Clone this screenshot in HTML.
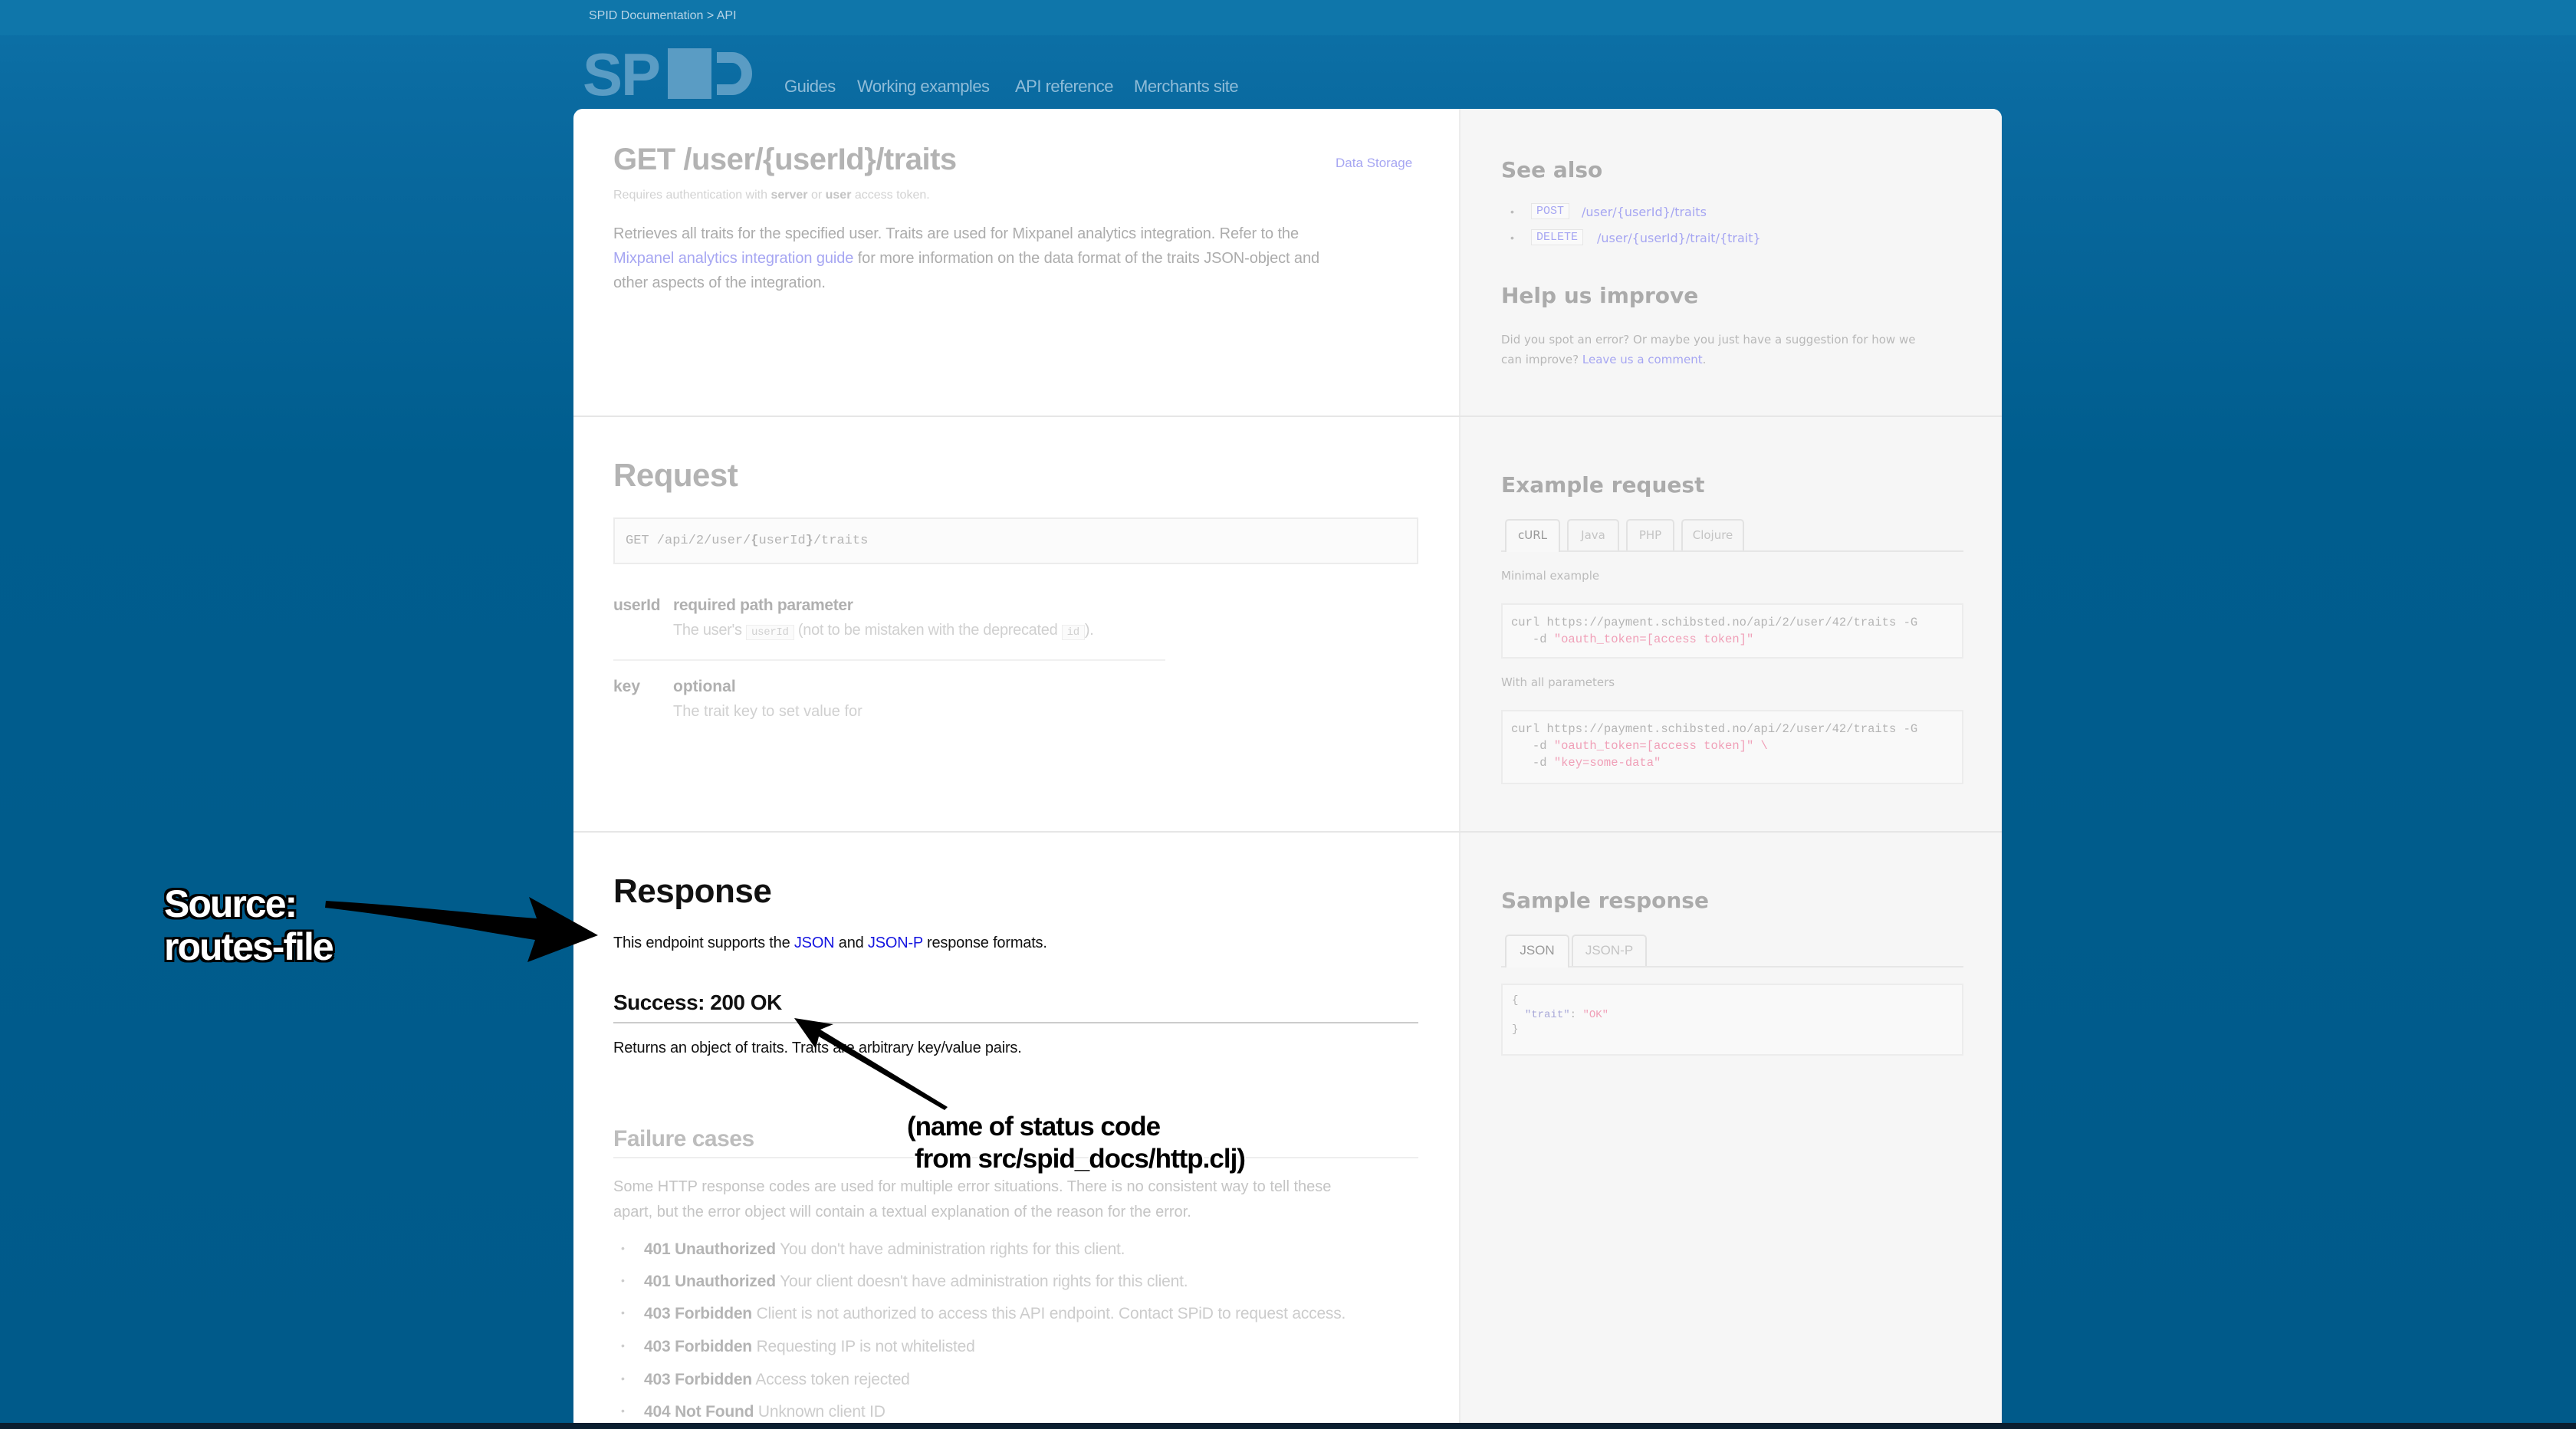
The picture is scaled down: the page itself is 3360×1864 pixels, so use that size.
<!DOCTYPE html>
<html><head><meta charset="utf-8"><style>
*{margin:0;padding:0;box-sizing:border-box}
body{width:3360px;height:1864px;overflow:hidden;position:relative;font-family:"Liberation Sans",Arial,sans-serif;background:linear-gradient(#0d72a8 0px,#0a6aa0 140px,#005d8e 600px,#005a8a 1864px)}
.a{position:absolute;white-space:nowrap}
.topbar{position:absolute;left:0;top:0;width:3360px;height:46px;background:#0f76aa}
.card{position:absolute;left:748px;top:142px;width:1863px;height:1720px;background:#fff;border-radius:12px 12px 0 0;overflow:hidden}
.right{position:absolute;left:1155px;top:0;width:708px;height:1720px;background:#f6f6f6;border-left:2px solid #ececec}
.hr{position:absolute;left:0;width:1863px;height:2px;background:#e6e6e6}
.bottom{position:absolute;left:0;top:1856px;width:3360px;height:8px;background:#0a1e30}
.mono{font-family:"Liberation Mono",monospace}
.code{position:absolute;border:2px solid #ececec;background:#fbfbfb}
.tab{position:absolute;border:2px solid #e2e2e2;border-bottom:none;border-radius:5px 5px 0 0;font-family:"DejaVu Sans",sans-serif;font-size:15px;color:#c4c4c4;text-align:center;background:#f6f6f6;white-space:nowrap}
.rs{font-family:"DejaVu Sans",sans-serif}
.li{position:absolute;left:800px;font-size:21px;color:#ccc;white-space:nowrap;letter-spacing:-0.2px}
.li b{color:#b4b4b4}
.li:before{content:"•";position:absolute;left:10px;top:2px;font-size:14px;color:#ccc}
.li span{margin-left:40px}
.outw{color:#fff;font-weight:bold;text-shadow:-3px -3px 0 #000,3px -3px 0 #000,-3px 3px 0 #000,3px 3px 0 #000,0 3px 0 #000,0 -3px 0 #000,3px 0 0 #000,-3px 0 0 #000}
.outb{color:#000;font-weight:bold;text-shadow:-2px -2px 0 #fff,2px -2px 0 #fff,-2px 2px 0 #fff,2px 2px 0 #fff,0 2px 0 #fff,0 -2px 0 #fff,2px 0 0 #fff,-2px 0 0 #fff}
</style></head><body>
<div class="topbar"></div>
<div class="a" style="left:768px;top:12px;font-size:16px;color:#b8d4e6">SPID Documentation &gt; API</div>
<div class="a" style="left:760px;top:52px;font-size:78px;font-weight:bold;color:#5a9cc4;letter-spacing:-2px;line-height:90px">SP</div>
<div class="a" style="left:871px;top:63px;width:57px;height:66px;background:#5a9cc4"></div>
<svg class="a" style="left:935px;top:62px" width="56" height="68"><path d="M0 6 H20 A26 28 0 0 1 20 62 H0 V48 H20 A12 14 0 0 0 20 20 H0 Z" fill="#5a9cc4"/></svg>
<div class="a" style="left:1023px;top:100px;font-size:22px;color:#8fbcd8;letter-spacing:-0.5px">Guides</div>
<div class="a" style="left:1118px;top:100px;font-size:22px;color:#8fbcd8;letter-spacing:-0.5px">Working examples</div>
<div class="a" style="left:1324px;top:100px;font-size:22px;color:#8fbcd8;letter-spacing:-0.5px">API reference</div>
<div class="a" style="left:1479px;top:100px;font-size:22px;color:#8fbcd8;letter-spacing:-0.5px">Merchants site</div>

<div class="card">
<div class="right"></div>
<div class="hr" style="top:400px"></div>
<div class="hr" style="top:942px"></div>
</div>
<div class="bottom"></div>

<div class="a" style="left:800px;top:186px;font-size:40px;font-weight:bold;color:#b3b3b3;letter-spacing:-0.5px">GET /user/{userId}/traits</div>
<div class="a" style="left:1742px;top:203px;font-size:17px;color:#a6a6f2">Data Storage</div>
<div class="a" style="left:800px;top:246px;font-size:16px;color:#d2d2d2">Requires authentication with <b style="color:#c4c4c4">server</b> or <b style="color:#c4c4c4">user</b> access token.</div>
<div class="a" style="left:800px;top:289px;font-size:20px;line-height:32px;color:#acacac;letter-spacing:-0.1px">Retrieves all traits for the specified user. Traits are used for Mixpanel analytics integration. Refer to the<br><span style="color:#a6a6f2">Mixpanel analytics integration guide</span> for more information on the data format of the traits JSON-object and<br>other aspects of the integration.</div>

<div class="a rs" style="left:1958px;top:205px;font-size:28px;font-weight:bold;color:#ababab">See also</div>
<div class="a" style="left:1970px;top:268px;font-size:14px;color:#bbb">•</div>
<div class="a mono" style="left:1997px;top:265px;border:1px solid #e6e6e6;background:#fafafa;padding:1px 6px;font-size:15px;color:#a6a6f2">POST</div>
<div class="a rs" style="left:2063px;top:267px;font-size:16px;color:#a6a6f2">/user/{userId}/traits</div>
<div class="a" style="left:1970px;top:302px;font-size:14px;color:#bbb">•</div>
<div class="a mono" style="left:1997px;top:299px;border:1px solid #e6e6e6;background:#fafafa;padding:1px 6px;font-size:15px;color:#a6a6f2">DELETE</div>
<div class="a rs" style="left:2083px;top:301px;font-size:16px;color:#a6a6f2">/user/{userId}/trait/{trait}</div>
<div class="a rs" style="left:1958px;top:369px;font-size:28px;font-weight:bold;color:#ababab">Help us improve</div>
<div class="a rs" style="left:1958px;top:430px;font-size:15px;line-height:26px;color:#b8b8b8">Did you spot an error? Or maybe you just have a suggestion for how we<br>can improve? <span style="color:#a6a6f2">Leave us a comment</span>.</div>

<div class="a" style="left:800px;top:596px;font-size:42px;font-weight:bold;color:#b3b3b3;letter-spacing:-0.5px">Request</div>
<div class="code" style="left:800px;top:675px;width:1050px;height:61px"></div>
<div class="a mono" style="left:816px;top:696px;font-size:17px;color:#b4b4b4">GET /api/2/user/<b>{</b>userId<b>}</b>/traits</div>
<div class="a" style="left:800px;top:778px;font-size:21px;font-weight:bold;color:#b0b0b0;letter-spacing:-0.3px">userId</div>
<div class="a" style="left:878px;top:778px;font-size:21px;font-weight:bold;color:#b0b0b0;letter-spacing:-0.3px">required path parameter</div>
<div class="a" style="left:878px;top:811px;font-size:20px;color:#d0d0d0;letter-spacing:-0.3px">The user's <span class="mono" style="font-size:14px;border:1px solid #eee;padding:1px 6px;background:#fbfbfb">userId</span> (not to be mistaken with the deprecated <span class="mono" style="font-size:14px;border:1px solid #eee;padding:1px 6px;background:#fbfbfb">id</span>).</div>
<div class="a" style="left:800px;top:860px;width:720px;height:2px;background:#f0f0f0"></div>
<div class="a" style="left:800px;top:884px;font-size:21px;font-weight:bold;color:#b0b0b0">key</div>
<div class="a" style="left:878px;top:884px;font-size:21px;font-weight:bold;color:#b0b0b0">optional</div>
<div class="a" style="left:878px;top:917px;font-size:20px;color:#d0d0d0">The trait key to set value for</div>

<div class="a rs" style="left:1958px;top:616px;font-size:28px;font-weight:bold;color:#ababab">Example request</div>
<div class="a" style="left:1958px;top:718px;width:603px;height:2px;background:#e6e6e6"></div>
<div class="tab" style="left:1963px;top:677px;width:72px;height:43px;line-height:38px;color:#999;background:#f8f8f8">cURL</div>
<div class="tab" style="left:2044px;top:677px;width:68px;height:41px;line-height:38px">Java</div>
<div class="tab" style="left:2121px;top:677px;width:63px;height:41px;line-height:38px">PHP</div>
<div class="tab" style="left:2193px;top:677px;width:82px;height:41px;line-height:38px">Clojure</div>
<div class="a rs" style="left:1958px;top:742px;font-size:15px;color:#bbb">Minimal example</div>
<div class="code" style="left:1958px;top:787px;width:603px;height:72px;background:#f9f9f9"></div>
<div class="a mono" style="left:1971px;top:801px;font-size:15.5px;line-height:22px;color:#b4b4b4">curl https://payment.schibsted.no/api/2/user/42/traits -G<br>&nbsp;&nbsp;&nbsp;-d <span style="color:#f0a0b8">"oauth_token=[access token]"</span></div>
<div class="a rs" style="left:1958px;top:881px;font-size:15px;color:#bbb">With all parameters</div>
<div class="code" style="left:1958px;top:926px;width:603px;height:97px;background:#f9f9f9"></div>
<div class="a mono" style="left:1971px;top:940px;font-size:15.5px;line-height:22px;color:#b4b4b4">curl https://payment.schibsted.no/api/2/user/42/traits -G<br>&nbsp;&nbsp;&nbsp;-d <span style="color:#f0a0b8">"oauth_token=[access token]" \</span><br>&nbsp;&nbsp;&nbsp;-d <span style="color:#f0a0b8">"key=some-data"</span></div>

<div class="a" style="left:800px;top:1138px;font-size:44px;font-weight:bold;color:#111;letter-spacing:-0.5px">Response</div>
<div class="a" style="left:800px;top:1219px;font-size:20px;color:#111;letter-spacing:-0.2px">This endpoint supports the <span style="color:#1515e0">JSON</span> and <span style="color:#1515e0">JSON-P</span> response formats.</div>
<div class="a" style="left:800px;top:1292px;font-size:28px;font-weight:bold;color:#111;letter-spacing:-0.5px">Success: 200 OK</div>
<div class="a" style="left:800px;top:1333px;width:1050px;height:2px;background:#ccc"></div>
<div class="a" style="left:800px;top:1356px;font-size:20px;color:#111;letter-spacing:-0.2px">Returns an object of traits. Traits are arbitrary key/value pairs.</div>
<div class="a" style="left:800px;top:1469px;font-size:30px;font-weight:bold;color:#bdbdbd;letter-spacing:-0.5px">Failure cases</div>
<div class="a" style="left:800px;top:1509px;width:1050px;height:2px;background:#eee"></div>
<div class="a" style="left:800px;top:1532px;font-size:20px;line-height:33px;color:#c4c4c4">Some HTTP response codes are used for multiple error situations. There is no consistent way to tell these<br>apart, but the error object will contain a textual explanation of the reason for the error.</div>
<div class="li" style="top:1618px"><span><b>401 Unauthorized</b> You don't have administration rights for this client.</span></div>
<div class="li" style="top:1660px"><span><b>401 Unauthorized</b> Your client doesn't have administration rights for this client.</span></div>
<div class="li" style="top:1702px"><span><b>403 Forbidden</b> Client is not authorized to access this API endpoint. Contact SPiD to request access.</span></div>
<div class="li" style="top:1745px"><span><b>403 Forbidden</b> Requesting IP is not whitelisted</span></div>
<div class="li" style="top:1788px"><span><b>403 Forbidden</b> Access token rejected</span></div>
<div class="li" style="top:1830px"><span><b>404 Not Found</b> Unknown client ID</span></div>

<div class="a rs" style="left:1958px;top:1158px;font-size:28px;font-weight:bold;color:#ababab">Sample response</div>
<div class="a" style="left:1958px;top:1260px;width:603px;height:2px;background:#e6e6e6"></div>
<div class="tab" style="left:1963px;top:1219px;width:84px;height:43px;line-height:38px;color:#999;background:#f8f8f8;font-family:'Liberation Sans',sans-serif;font-size:17px">JSON</div>
<div class="tab" style="left:2050px;top:1219px;width:98px;height:41px;line-height:38px;font-family:'Liberation Sans',sans-serif;font-size:17px">JSON-P</div>
<div class="code" style="left:1958px;top:1283px;width:603px;height:94px;background:#f9f9f9"></div>
<div class="a mono" style="left:1972px;top:1296px;font-size:14px;line-height:19px;color:#b4b4b4">{<br>&nbsp;&nbsp;<span style="color:#a8a8d8">"trait"</span>: <span style="color:#f0a0b8">"OK"</span><br>}</div>

<svg class="a" style="left:0;top:0" width="3360" height="1864">
<path d="M425 1175 C540 1182 620 1192 700 1198 L690 1170 L780 1220 L688 1255 L698 1226 C610 1212 530 1196 424 1184 Z" fill="#000"/>
<path d="M1236 1444 L1070 1343 L1087 1336 L1036 1328 L1064 1368 L1068 1352 L1232 1448 Z" fill="#000"/>
</svg>
<div class="a outw" style="left:214px;top:1150px;font-size:50px;letter-spacing:-2px">Source:</div>
<div class="a outw" style="left:214px;top:1206px;font-size:50px;letter-spacing:-2px">routes-file</div>
<div class="a outb" style="left:1183px;top:1450px;font-size:35px;letter-spacing:-1px">(name of status code</div>
<div class="a outb" style="left:1193px;top:1492px;font-size:35px;letter-spacing:-1px">from src/spid_docs/http.clj)</div>
</body></html>
